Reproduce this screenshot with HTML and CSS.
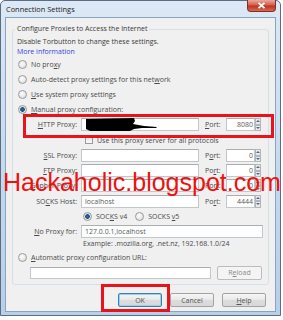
FILE: index.html
```html
<!DOCTYPE html>
<html lang="en">
<head>
  <meta charset="UTF-8">
  <title>Connection Settings</title>
  <link rel="stylesheet" href="styles.css">
</head>
<body>

<div class="window">
  <div class="titlebar">
    <span class="title">Connection Settings</span>
    <span class="close">
      <svg width="9" height="7" viewBox="0 0 9 7"><path d="M1.5 0.8 L7.5 6.2 M7.5 0.8 L1.5 6.2" stroke="#fff" stroke-width="1.8"/></svg>
    </span>
  </div>

  <div class="client">
    <fieldset class="group">
      <legend>Configure Proxies to Access the Internet</legend>
      <div class="note">Disable Torbutton to change these settings.</div>
      <div class="note link">More information</div>

      <div class="opt"><span class="radio"></span>No pro<u>x</u>y</div>
      <div class="opt"><span class="radio"></span>Auto-detect proxy settings for this net<u>w</u>ork</div>
      <div class="opt"><span class="radio"></span><u>U</u>se system proxy settings</div>
      <div class="opt"><span class="radio on"></span><u>M</u>anual proxy configuration:</div>

      <!-- proxy fields -->
      <div class="field">
        <span class="lbl"><u>H</u>TTP Proxy:</span>
        <span class="input host">
          <svg class="scribble" width="74" height="14" viewBox="0 0 74 14"><path d="M2 1 L50 0 L51 3 L49 6 L60 8 L73 9 L72 10 L58 10 L50 11 L46 13 L6 13 L2 11 Z" fill="#000"/></svg>
        </span>
        <span class="plbl"><u>P</u>ort:</span>
        <span class="input port">8080</span><span class="spin"><i class="up"></i><i class="down"></i></span>
      </div>
      <div class="check"><span class="box"></span>Use this proxy server for all protocols</div>
      <div class="field">
        <span class="lbl"><u>S</u>SL Proxy:</span>
        <span class="input host"></span>
        <span class="plbl">P<u>o</u>rt:</span>
        <span class="input port">0</span><span class="spin"><i class="up"></i><i class="down"></i></span>
      </div>
      <div class="field">
        <span class="lbl"><u>F</u>TP Proxy:</span>
        <span class="input host"></span>
        <span class="plbl">Po<u>r</u>t:</span>
        <span class="input port">0</span><span class="spin"><i class="up"></i><i class="down"></i></span>
      </div>
      <div class="field">
        <span class="lbl"><u>G</u>opher Proxy:</span>
        <span class="input host"></span>
        <span class="plbl">Por<u>t</u>:</span>
        <span class="input port">0</span><span class="spin"><i class="up"></i><i class="down"></i></span>
      </div>
      <div class="field socks">
        <span class="lbl">SO<u>C</u>KS Host:</span>
        <span class="input host">localhost</span>
        <span class="plbl">Po<u>r</u>t:</span>
        <span class="input port">4444</span><span class="spin"><i class="up"></i><i class="down"></i></span>
      </div>
      <div class="versions">
        <span class="radio on"></span><span class="ver">SOC<u>K</u>S v4</span>
        <span class="radio"></span><span>SOCKS <u>v</u>5</span>
      </div>
      <div class="field">
        <span class="lbl"><u>N</u>o Proxy for:</span>
        <span class="input noproxy">127.0.0.1,localhost</span>
      </div>
      <div class="example">Example: .mozilla.org, .net.nz, 192.168.1.0/24</div>

      <div class="opt"><span class="radio"></span><u>A</u>utomatic proxy configuration URL:</div>
      <div class="url-row">
        <span class="input url"></span>
        <span class="btn reload">R<u>e</u>load</span>
      </div>
    </fieldset>

    <div class="buttons">
      <span class="btn default">OK</span>
      <span class="btn">Cancel</span>
      <span class="btn"><u>H</u>elp</span>
    </div>
  </div>

  <div class="mark mark-http"></div>
  <div class="mark mark-ok"></div>
  <div class="watermark">Hackaholic.blogspot.com</div>
</div>

</body>
</html>
```

FILE: styles.css
```css
body {
  margin: 0;
  background-color: #ffffff;
}
.window {
  position: relative;
  width: 281px;
  height: 316px;
  box-sizing: border-box;
  border: 1px solid #5d6c7f;
  border-radius: 5px 5px 0 0;
  padding: 0 4px 4px;
  background: linear-gradient(#dce8f5, #c3d8ee 60%, #b7cfe9);
  font-family: "Open Sans", sans-serif;
  font-size: 7px;
  color: #4a4a4a;
}
.titlebar {
  height: 16px;
  display: flex;
  align-items: flex-start;
  justify-content: space-between;
}
.title {
  margin-top: 4px;
  padding-left: 1px;
  font-size: 7.4px;
  line-height: 9px;
  color: #1b1b1b;
}
.close {
  width: 27px;
  height: 11px;
  margin-top: -1px;
  border: 1px solid #7a3128;
  border-top: none;
  border-radius: 0 0 4px 4px;
  background: linear-gradient(#e8a99e, #d2604f 45%, #c0331f 55%, #d96a52);
  display: flex;
  align-items: center;
  justify-content: center;
}
.client {
  height: 295px;
  box-sizing: border-box;
  border: 1px solid #8ba3be;
  background-color: #f0f0f0;
}
.group {
  margin: 6px 6px 0;
  padding: 0 0 4px;
  border: 1px solid #d5dfe5;
  border-radius: 3px;
  min-width: 0;
}
.group legend {
  margin-left: 2px;
  padding: 0 2px;
  line-height: 10px;
  color: #3a3a3a;
}
.note {
  padding-left: 4px;
  line-height: 10px;
  color: #3a3a3a;
}
.note:first-of-type {
  margin-top: 3px;
}
.link {
  color: #3344dd;
}
u {
  text-decoration-thickness: 0.6px;
  text-underline-offset: 1px;
}
.opt {
  height: 15px;
  display: flex;
  align-items: center;
  padding-left: 5px;
}
.radio {
  width: 7px;
  height: 7px;
  margin-right: 4px;
  border: 1px solid #9a9a9a;
  border-radius: 50%;
  background: radial-gradient(circle at 40% 35%, #fdfdfd, #d8d8d8);
  flex: none;
}
.radio.on {
  background: radial-gradient(circle, #2f6ea6 0, #1b4c7c 2px, #e8e8e8 2.6px, #d0d0d0);
}
.field {
  height: 15px;
  display: flex;
  align-items: center;
}
.field.socks {
  height: 16px;
}
.lbl {
  width: 64px;
  text-align: right;
  margin-right: 4px;
}
.input {
  height: 13px;
  box-sizing: border-box;
  border: 1px solid #c2c7cc;
  border-top-color: #abadb3;
  background-color: #ffffff;
  line-height: 11px;
  padding: 0 3px;
  color: #5a5a5a;
}
.host {
  position: relative;
  width: 118px;
}
.scribble {
  position: absolute;
  left: 2px;
  top: -1px;
}
.plbl {
  width: 21px;
  margin-left: 6px;
}
.port {
  width: 29px;
  text-align: right;
  padding-right: 1px;
}
.spin {
  width: 6px;
  height: 13px;
  display: flex;
  flex-direction: column;
}
.spin i {
  flex: 1;
  border: 1px solid #b5b5b5;
  background: #e9e9e9;
  position: relative;
}
.spin i::after {
  content: "";
  position: absolute;
  left: 0;
  top: 1px;
  border-left: 2px solid transparent;
  border-right: 2px solid transparent;
}
.spin .up::after {
  border-bottom: 2px solid #4a6b94;
}
.spin .down::after {
  border-top: 2px solid #4a6b94;
}
.check {
  height: 16px;
  display: flex;
  align-items: center;
  padding-left: 72px;
}
.box {
  width: 6px;
  height: 6px;
  margin-right: 4px;
  border: 1px solid #9a9a9a;
  background: linear-gradient(#e2e2e2, #fafafa);
}
.versions {
  height: 15px;
  display: flex;
  align-items: center;
  padding-left: 70px;
}
.ver {
  margin-right: 8px;
}
.noproxy {
  width: 182px;
}
.example {
  height: 10px;
  line-height: 10px;
  padding-left: 70px;
  margin-bottom: 1px;
}
.url-row {
  height: 15px;
  display: flex;
  align-items: center;
  padding-left: 17px;
}
.url {
  width: 181px;
  height: 12px;
}
.btn {
  height: 14px;
  box-sizing: border-box;
  border: 1px solid #a3a3a3;
  border-radius: 2px;
  background: linear-gradient(#f6f6f6, #e8e8e8 50%, #dcdcdc 51%, #d8d8d8);
  display: flex;
  align-items: center;
  justify-content: center;
  color: #555;
}
.reload {
  width: 45px;
  margin-left: 6px;
  color: #8a8a8a;
  background: #f4f4f4;
  border-color: #bcbcbc;
}
.buttons {
  display: flex;
  justify-content: flex-end;
  gap: 8px;
  margin: 8px 9px 0 0;
}
.buttons .btn {
  width: 44px;
}
.btn.default {
  border-color: #3c7fb1;
  box-shadow: inset 0 0 0 1px #9ad0ef;
}
.mark {
  position: absolute;
  border: 3px solid #e8141c;
}
.mark-http {
  left: 22px;
  top: 113px;
  width: 245px;
  height: 18px;
}
.mark-ok {
  left: 100px;
  top: 283px;
  width: 63px;
  height: 22px;
}
.watermark {
  position: absolute;
  left: 2px;
  top: 167px;
  font-family: "Liberation Sans", sans-serif;
  font-size: 25px;
  line-height: 28px;
  color: #ee1111;
}
```
